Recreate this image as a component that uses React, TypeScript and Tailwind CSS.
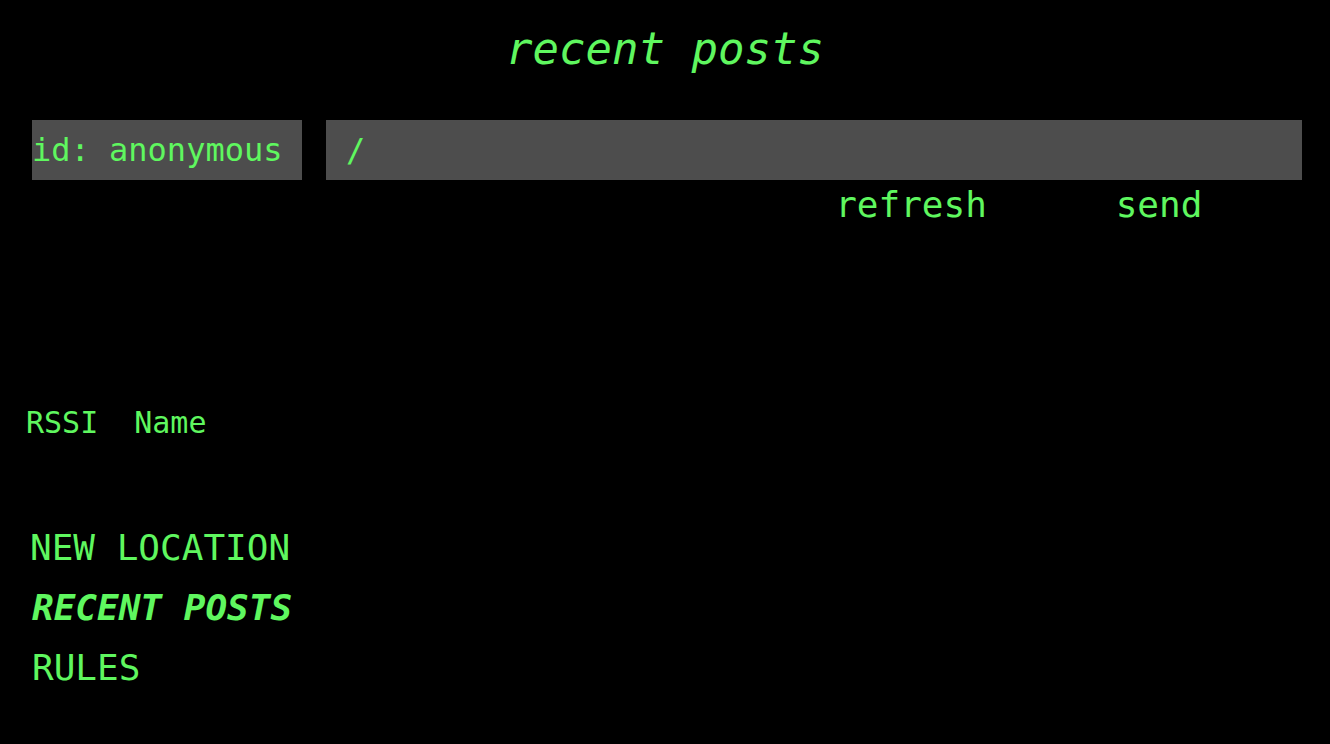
import React from "react";

const mono = "font-['DejaVu_Sans_Mono',monospace]";

export default function App() {
  return (
    <div className={`min-h-[744px] w-full bg-black text-[#5ff75f] ${mono}`}>
      {/* Title */}
      <h1 className="pt-[19px] text-center text-[44px] italic leading-[60px]">
        recent posts
      </h1>

      {/* Composer */}
      <div className="mt-[41px] flex gap-[24px] pl-[32px] pr-[28px]">
        <div className="flex h-[60px] w-[270px] shrink-0 items-center bg-[#4d4d4d] text-[32px]">
          id: anonymous
        </div>
        <div className="flex h-[60px] flex-1 items-center bg-[#4d4d4d] pl-[20px] text-[32px]">
          /
        </div>
      </div>

      {/* Actions */}
      <div className="flex pl-[787px] text-[36px] leading-[50px]">
        <button type="button" className="w-[248px] text-center">
          refresh
        </button>
        <button type="button" className="w-[248px] text-center">
          send
        </button>
      </div>

      {/* Peers table */}
      <table className="ml-[26px] mt-[173px] text-[30px] leading-[40px]">
        <thead>
          <tr>
            <th className="pr-[36px] text-left font-normal">RSSI</th>
            <th className="text-left font-normal">Name</th>
          </tr>
        </thead>
      </table>

      {/* Nav */}
      <nav className="mt-[75px] flex flex-col items-start pl-[30px] text-[36px] leading-[60px]">
        <a>NEW LOCATION</a>
        <a className="ml-[2px] font-bold italic">RECENT POSTS</a>
        <a className="ml-[2px]">RULES</a>
      </nav>
    </div>
  );
}
